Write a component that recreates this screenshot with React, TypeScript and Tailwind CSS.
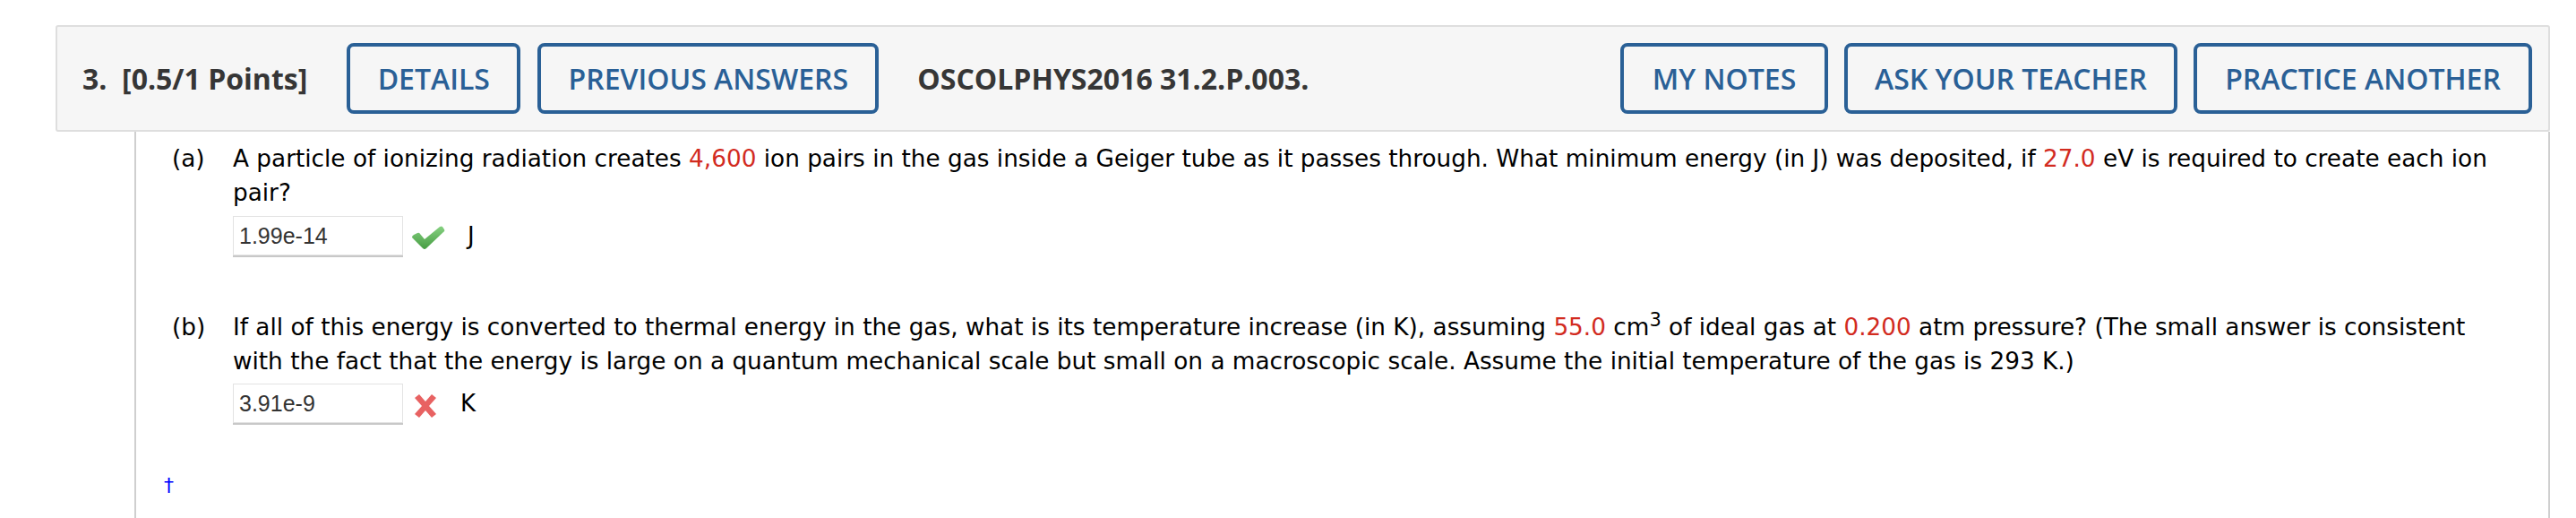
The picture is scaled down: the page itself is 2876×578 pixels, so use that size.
const headerFont = { fontFamily: '"Open Sans", "Liberation Sans", sans-serif' };

function HeaderButton({ label, w }: { label: string; w: string }) {
  return (
    <button
      className={`${w} h-[79px] rounded-[8px] border-[4px] border-[#2a6096] bg-[#f6f6f6] text-[32px] font-semibold text-[#2a6096] whitespace-nowrap flex items-center justify-center`}
    >
      {label}
    </button>
  );
}

function Answer({ value, correct, unit }: { value: string; correct: boolean; unit: string }) {
  return (
    <div className="flex items-center">
      <div className="w-[190px] h-[44px] bg-white border border-[#e3e3e3] shadow-[0_2px_0_#c8c8c8] pl-[6px] flex items-center text-[25px] text-[#333] font-['Liberation_Sans',Arial,sans-serif]">
        {value}
      </div>
      {correct ? (
        <svg width="40" height="28" viewBox="0 0 40 28" className="ml-[8px] mt-[4px]">
          <defs>
            <linearGradient id="chk" x1="0" y1="0" x2="0" y2="1">
              <stop offset="0" stopColor="#86d181" />
              <stop offset="1" stopColor="#469c42" />
            </linearGradient>
          </defs>
          <path
            d="M2 14 Q2 12 4 11 L8 9 Q10 8 11 10 L16 16 L33 2 Q35 1 36 2 L38 5 Q39 7 37 8 L18 26 Q16 28 14 26 Z"
            fill="url(#chk)"
          />
        </svg>
      ) : (
        <svg width="30" height="28" viewBox="0 0 30 28" className="ml-[10px] mt-[6px]">
          <path
            d="M3 5 L8 1 L15 9 L22 1 L27 5 L19 14 L27 23 L22 27 L15 19 L8 27 L3 23 L11 14 Z"
            fill="#e86262"
          />
        </svg>
      )}
      <span className="ml-[24px] text-[26px] text-black">{unit}</span>
    </div>
  );
}

const Red = ({ children }: { children: React.ReactNode }) => (
  <span className="text-[#d22b1f]">{children}</span>
);

export default function App() {
  return (
    <div className="h-[578px] overflow-hidden bg-white pt-[28px] flex flex-col">
      {/* question header */}
      <div
        style={headerFont}
        className="ml-[62px] mr-[29px] h-[119px] flex items-center bg-[#f6f6f6] border-2 border-[#dedede] rounded-[3px] pl-[28px] pr-[18px]"
      >
        <span className="text-[32px] font-bold text-[#363636] whitespace-nowrap">3.&nbsp; [0.5/1 Points]</span>
        <div className="ml-[44px] flex gap-[19px]">
          <HeaderButton label="DETAILS" w="w-[194px]" />
          <HeaderButton label="PREVIOUS ANSWERS" w="w-[381px]" />
        </div>
        <span className="ml-[43px] text-[32px] font-bold text-[#363636] whitespace-nowrap">
          OSCOLPHYS2016 31.2.P.003.
        </span>
        <div className="ml-auto flex gap-[18px]">
          <HeaderButton label="MY NOTES" w="w-[232px]" />
          <HeaderButton label="ASK YOUR TEACHER" w="w-[372px]" />
          <HeaderButton label="PRACTICE ANOTHER" w="w-[378px]" />
        </div>
      </div>

      {/* question body */}
      <div className="flex-1 ml-[150px] mr-[29px] border-x-2 border-[#cfcfcf] pt-[11px] pl-[40px] pr-[56px] text-[26.3px] leading-[38px] text-black font-['DejaVu_Sans',Verdana,sans-serif]">
        <div className="flex">
          <span className="w-[68px] shrink-0">(a)</span>
          <div>
            <p>
              A particle of ionizing radiation creates <Red>4,600</Red> ion pairs in the gas inside a Geiger tube as it
              passes through. What minimum energy (in J) was deposited, if <Red>27.0</Red> eV is required to create
              each ion pair?
            </p>
            <div className="mt-[7px]">
              <Answer value="1.99e-14" correct unit="J" />
            </div>
          </div>
        </div>

        <div className="flex mt-[61px]">
          <span className="w-[68px] shrink-0">(b)</span>
          <div>
            <p>
              If all of this energy is converted to thermal energy in the gas, what is its temperature increase (in K),
              assuming <Red>55.0</Red> cm<sup className="text-[21px] leading-none">3</sup> of ideal gas at{' '}
              <Red>0.200</Red> atm pressure? (The small answer is consistent with the fact that the energy is large on
              a quantum mechanical scale but small on a macroscopic scale. Assume the initial temperature of the gas
              is 293 K.)
            </p>
            <div className="mt-[6px]">
              <Answer value="3.91e-9" correct={false} unit="K" />
            </div>
          </div>
        </div>

        <div className="mt-[58px] -ml-[9px] text-[#0000ff] text-[22px] leading-[24px]">†</div>
      </div>
    </div>
  );
}
